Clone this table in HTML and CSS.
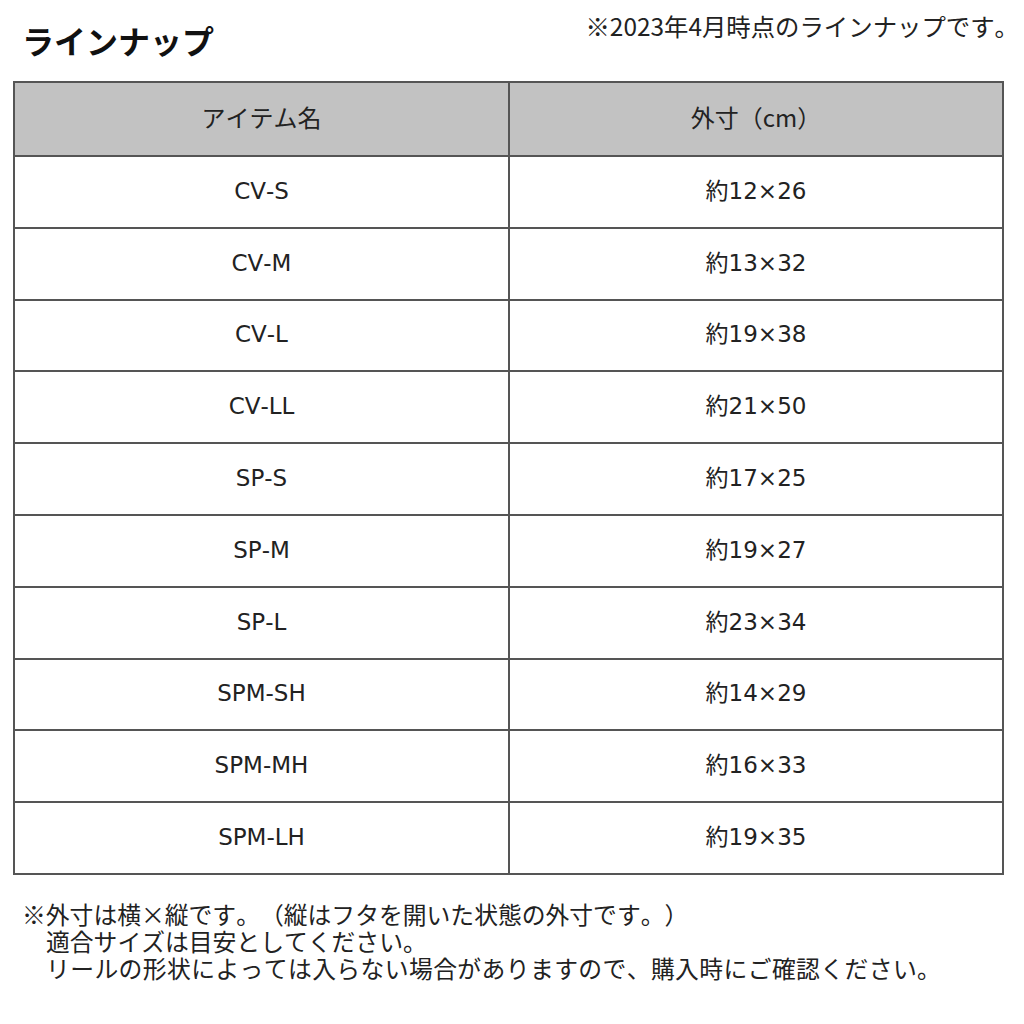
FILE: index.html
```html
<!DOCTYPE html>
<html lang="ja">
<head>
<meta charset="utf-8">
<link rel="stylesheet" href="styles.css">
</head>
<body>
<div class="page">
  <div class="top">
    <h1 class="title">ラインナップ</h1>
    <p class="note">※2023年4月時点のラインナップです。</p>
  </div>
  <div class="table">
    <div class="row head"><div class="cell">アイテム名</div><div class="cell right">外寸（cm）</div></div>
    <div class="row"><div class="cell">CV-S</div><div class="cell right">約12×26</div></div>
    <div class="row"><div class="cell">CV-M</div><div class="cell right">約13×32</div></div>
    <div class="row"><div class="cell">CV-L</div><div class="cell right">約19×38</div></div>
    <div class="row"><div class="cell">CV-LL</div><div class="cell right">約21×50</div></div>
    <div class="row"><div class="cell">SP-S</div><div class="cell right">約17×25</div></div>
    <div class="row"><div class="cell">SP-M</div><div class="cell right">約19×27</div></div>
    <div class="row"><div class="cell">SP-L</div><div class="cell right">約23×34</div></div>
    <div class="row"><div class="cell">SPM-SH</div><div class="cell right">約14×29</div></div>
    <div class="row"><div class="cell">SPM-MH</div><div class="cell right">約16×33</div></div>
    <div class="row"><div class="cell">SPM-LH</div><div class="cell right">約19×35</div></div>
  </div>
  <div class="foot">
    <p class="line first">※外寸は横×縦です。（縦はフタを開いた状態の外寸です。）</p>
    <p class="line">適合サイズは目安としてください。</p>
    <p class="line wide">リールの形状によっては入らない場合がありますので、購入時にご確認ください。</p>
  </div>
</div>
</body>
</html>
```

FILE: styles.css
```css
* { box-sizing: border-box; }
html, body { margin: 0; padding: 0; background: #fff; }
body {
  font-family: "Noto Sans CJK JP", "DejaVu Sans", sans-serif;
  color: #222;
  text-spacing-trim: space-all;
  font-kerning: none;
}
.page { width: 1024px; height: 1024px; overflow: hidden; }
.top {
  height: 81px;
  display: flex;
  justify-content: space-between;
  align-items: flex-start;
  padding: 0 5px 0 22px;
}
.title {
  margin: 20px 0 0 0;
  font-size: 32px;
  line-height: 40px;
  font-weight: 700;
  color: #111;
}
.note {
  margin: 11px 0 0 0;
  font-size: 24.4px;
  line-height: 30px;
  color: #222;
}
.table {
  margin-left: 13px;
  width: 991px;
  border: 2px solid #555;
}
.row {
  display: grid;
  grid-template-columns: 493px 1fr;
  height: 71.8px;
  border-top: 2px solid #555;
}
.row.head {
  height: 72px;
  border-top: none;
  background: #c2c2c2;
}
.cell {
  display: flex;
  align-items: center;
  justify-content: center;
  font-family: "DejaVu Sans", "Noto Sans CJK JP", sans-serif;
  font-size: 23px;
  line-height: 28px;
  color: #222;
  padding-bottom: 2px;
}
.head .cell {
  font-family: "Noto Sans CJK JP", "DejaVu Sans", sans-serif;
  font-size: 24px;
  padding-bottom: 4px;
}
.cell.right { border-left: 2px solid #555; }
.foot { margin-top: 25px; }
.line {
  margin: 0;
  font-size: 23.8px;
  line-height: 27px;
  padding-left: 46px;
  white-space: nowrap;
}
.line.first { padding-left: 22px; }
.line.wide { letter-spacing: 0.4px; }
```
